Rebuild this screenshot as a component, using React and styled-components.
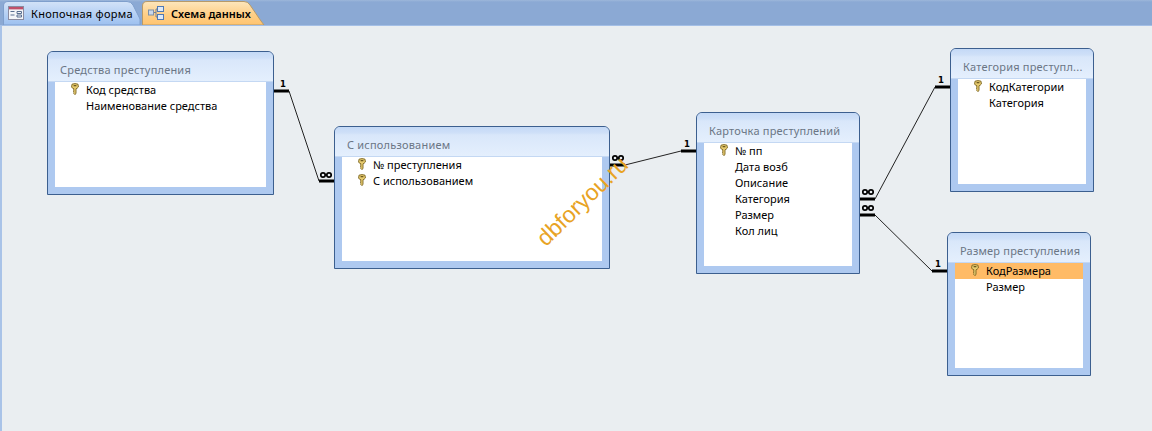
import React from "react";
import styled, { createGlobalStyle } from "styled-components";

const Global = createGlobalStyle`
  html, body { margin: 0; padding: 0; background: #eaeef1; }
  body { font-family: "Noto Sans", "DejaVu Sans", sans-serif; }
`;

const Page = styled.div`
  width: 1152px;
  height: 431px;
  display: flex;
  flex-direction: column;
  overflow: hidden;
`;

const TabStrip = styled.div`
  height: 25px;
  flex: none;
  display: flex;
  align-items: flex-end;
  padding-left: 3px;
  gap: 1px;
  box-sizing: border-box;
  background: linear-gradient(#9db7da 0, #8ba9d4 2px, #8ba9d4 100%);
`;

const Tab = styled.div`
  position: relative;
  width: ${(p) => p.$w}px;
  height: 24px;
  display: flex;
  align-items: center;
  gap: 7px;
  padding-left: ${(p) => p.$pad}px;
  box-sizing: border-box;
`;

const TabShape = styled.svg`
  position: absolute;
  left: 0;
  top: 0;
`;

const TabIcon = styled.svg`
  position: relative;
  flex: none;
`;

const TabLabel = styled.span`
  position: relative;
  font-size: 11px;
  letter-spacing: ${(p) => (p.$active ? 0 : 0.28)}px;
  color: #000;
  font-weight: ${(p) => (p.$active ? 600 : 400)};
  white-space: nowrap;
`;

const Canvas = styled.div`
  position: relative;
  flex: 1;
  background: #eaeef1;
  border-left: 2px solid #a9c3e8;
  border-top: 1px solid #a4bfe6;
`;

const Lines = styled.svg`
  position: absolute;
  left: -2px;
  top: -26px;
  width: 1152px;
  height: 431px;
`;

const One = styled.text`
  font-family: "DejaVu Sans", sans-serif;
  font-weight: 700;
  font-size: 8.5px;
  fill: #000;
  text-anchor: middle;
`;

const Table = styled.div`
  position: absolute;
  left: ${(p) => p.$x - 2}px;
  top: ${(p) => p.$y - 26}px;
  width: ${(p) => p.$w}px;
  height: ${(p) => p.$h}px;
  box-sizing: border-box;
  border: 1px solid #3c5f8f;
  border-radius: 6px 6px 0 0;
  background: #aec9f0;
  display: flex;
  flex-direction: column;
  overflow: hidden;
`;

const TableTitle = styled.div`
  height: 30px;
  flex: none;
  box-sizing: border-box;
  padding: 8px 0 0 12px;
  font-size: 11px;
  letter-spacing: 0.2px;
  line-height: 19px;
  color: #6b7685;
  white-space: nowrap;
  background: linear-gradient(#c4d9f6 0, #cfe0f8 6px, #d9e7fa 8px, #e4effd 100%);
  border-bottom: 1px solid #c4d8f3;
`;

const TableBody = styled.div`
  flex: 1;
  margin: 0 7px 7px 7px;
  background: #fff;
`;

const Row = styled.div`
  height: 16px;
  display: flex;
  align-items: flex-start;
  font-size: 11px;
  line-height: 15px;
  color: #000;
  white-space: nowrap;
  padding-left: ${(p) => (p.$keyed ? 16 : 31)}px;
  box-sizing: border-box;
  background: ${(p) => (p.$selected ? "#ffbb66" : "transparent")};
`;

const KeyIcon = styled.svg`
  flex: none;
  width: 8px;
  height: 12px;
  margin: 1px 7px 0 0;
`;

const Watermark = styled.div`
  position: absolute;
  left: 517px;
  top: 162px;
  width: 126px;
  text-align: center;
  font-family: "Liberation Sans", Arial, sans-serif;
  font-size: 23px;
  line-height: 26px;
  color: #e8a324;
  transform: rotate(-44deg);
  white-space: nowrap;
`;

const Key = () => (
  <KeyIcon viewBox="0 0 8 12">
    <path
      d="M1 1.2 Q4 0 7 1.2 L7.4 4 Q6 5.6 5 5.8 L5 10.6 L3.8 11.6 L2.8 10.6 L3 9.6 L2.4 9 L3 8 L2.6 7 L3 5.8 Q1.2 5.4 .6 4 Z"
      fill="#e8cc70"
      stroke="#7a6420"
      strokeWidth=".9"
    />
    <rect x="2.6" y="2" width="2.8" height="1.3" fill="#6d5a1e" />
  </KeyIcon>
);

const tables = [
  { id: 1, x: 47, y: 51, w: 227, h: 144, title: "Средства преступления", rows: [["Код средства", 1], ["Наименование средства", 0]] },
  { id: 2, x: 334, y: 126, w: 276, h: 143, title: "С использованием", rows: [["№ преступления", 1], ["С использованием", 1]] },
  { id: 3, x: 696, y: 112, w: 164, h: 162, title: "Карточка преступлений", rows: [["№ пп", 1], ["Дата возб", 0], ["Описание", 0], ["Категория", 0], ["Размер", 0], ["Кол лиц", 0]] },
  { id: 4, x: 950, y: 48, w: 144, h: 144, title: "Категория преступл...", rows: [["КодКатегории", 1], ["Категория", 0]] },
  { id: 5, x: 947, y: 232, w: 144, h: 144, title: "Размер преступления", rows: [["КодРазмера", 1, 1], ["Размер", 0]] },
];

const links = [
  { a: [274, 91], b: [289, 91], c: [319, 181], d: [334, 181], one: [283, 87], many: [326, 175] },
  { a: [610, 165], b: [625, 165], c: [681, 151], d: [696, 151], one: [687, 147], many: [618, 158] },
  { a: [860, 199], b: [875, 199], c: [935, 87], d: [950, 87], one: [941, 83], many: [868, 192] },
  { a: [860, 215], b: [875, 215], c: [932, 271], d: [947, 271], one: [938, 267], many: [868, 208] },
];

const Many = ({ x, y }) => (
  <g fill="none" stroke="#000" strokeWidth="1.7">
    <circle cx={x - 3} cy={y} r="2.2" />
    <circle cx={x + 3} cy={y} r="2.2" />
  </g>
);

export default function App() {
  return (
    <Page>
      <Global />
      <TabStrip>
        <Tab $w={138} $pad={5}>
          <TabShape width="138" height="24" viewBox="0 0 138 24">
            <defs>
              <linearGradient id="blueTab" x1="0" y1="0" x2="0" y2="1">
                <stop offset="0" stopColor="#d3e3f8" />
                <stop offset="1" stopColor="#9cc0f0" />
              </linearGradient>
            </defs>
            <path d="M.5 24 V5 Q.5 .5 5 .5 H124 Q128 .5 130 4 L137 18 V24 Z" fill="url(#blueTab)" stroke="#7f9fcc" />
          </TabShape>
          <TabIcon width="16" height="16" viewBox="0 0 16 16">
            <rect x=".5" y="1.5" width="15" height="13" fill="#f4f5f8" stroke="#8a8ba0" />
            <rect x="1" y="2" width="14" height="2.4" fill="#c0506a" />
            <path d="M2.5 6.5h4M2.5 10h4M9 6.5h4.5v2H9zM9 10h4.5v2H9z" fill="none" stroke="#5a6f90" />
          </TabIcon>
          <TabLabel>Кнопочная форма</TabLabel>
        </Tab>
        <Tab $w={124} $pad={6}>
          <TabShape width="124" height="24" viewBox="0 0 124 24">
            <defs>
              <linearGradient id="goldTab" x1="0" y1="0" x2="0" y2="1">
                <stop offset="0" stopColor="#fde6bc" />
                <stop offset=".55" stopColor="#ffcf87" />
                <stop offset="1" stopColor="#ffc470" />
              </linearGradient>
            </defs>
            <path d="M.5 24 V5 Q.5 .5 5 .5 H102 Q106 .5 108 4 L119 20 L122 24 Z" fill="url(#goldTab)" stroke="#b89a68" />
          </TabShape>
          <TabIcon width="16" height="16" viewBox="0 0 16 16">
            <path d="M4 7.5h4M8 4v8M8 4h2M8 12h2" stroke="#6f7f95" fill="none" />
            <rect x=".5" y="5" width="5" height="5" fill="#c9d7ea" stroke="#7d8fa8" />
            <rect x="9.5" y="1.5" width="6" height="5" fill="#dfe9f6" stroke="#4f79b5" />
            <rect x="9.5" y="9.5" width="6" height="5" fill="#dfe9f6" stroke="#4f79b5" />
          </TabIcon>
          <TabLabel $active>Схема данных</TabLabel>
        </Tab>
      </TabStrip>
      <Canvas>
        <Lines viewBox="0 0 1152 431">
          {links.map((l) => (
            <g key={l.one.join()}>
              <path d={`M${l.a[0]} ${l.a[1]}H${l.b[0]}M${l.c[0]} ${l.c[1]}H${l.d[0]}`} stroke="#000" strokeWidth="3" fill="none" />
              <path d={`M${l.b[0]} ${l.b[1]}L${l.c[0]} ${l.c[1]}`} stroke="#222" strokeWidth="1" fill="none" />
              <One x={l.one[0]} y={l.one[1]}>1</One>
              <Many x={l.many[0]} y={l.many[1]} />
            </g>
          ))}
        </Lines>
        {tables.map((t) => (
          <Table key={t.id} $x={t.x} $y={t.y} $w={t.w} $h={t.h}>
            <TableTitle>{t.title}</TableTitle>
            <TableBody>
              {t.rows.map(([name, keyed, selected]) => (
                <Row key={name} $keyed={!!keyed} $selected={!!selected}>
                  {keyed ? <Key /> : null}
                  {name}
                </Row>
              ))}
            </TableBody>
          </Table>
        ))}
        <Watermark>dbforyou.ru</Watermark>
      </Canvas>
    </Page>
  );
}
